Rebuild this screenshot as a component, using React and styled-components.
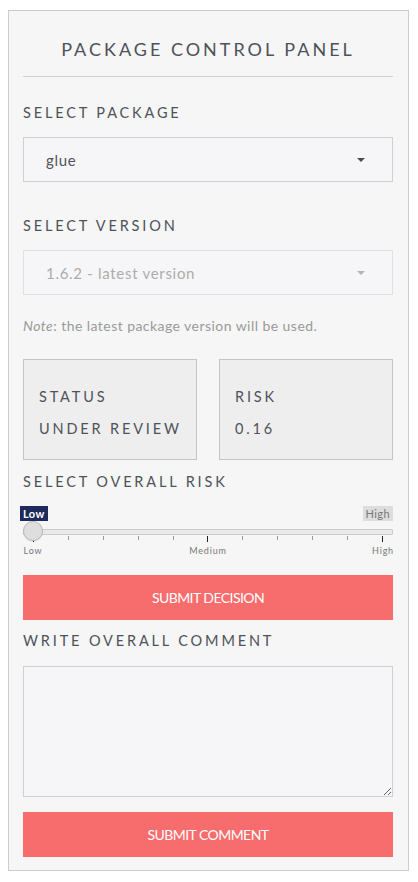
import React from "react";
import styled, { createGlobalStyle } from "styled-components";

const Global = createGlobalStyle`
  html, body { margin: 0; padding: 0; background: #ffffff; }
  body { font-family: "Lato", "Open Sans", sans-serif; }
  * { box-sizing: border-box; }
`;

const Panel = styled.div`
  margin: 10px 0 0 8px;
  width: 401px;
  background: #f6f6f6;
  border: 1px solid #cccccc;
  padding: 27px 15px 13px 14px;
  display: flex;
  flex-direction: column;
`;

const Title = styled.h1`
  margin: 0;
  font-size: 18px;
  line-height: 22px;
  font-weight: 400;
  letter-spacing: 3px;
  color: #4e525a;
  text-align: center;
`;

const Rule = styled.hr`
  margin: 16px 0 0;
  border: 0;
  height: 1px;
  background: #d0d0d3;
`;

const Label = styled.div`
  margin-top: ${(p) => p.$mt}px;
  font-size: 14.5px;
  line-height: 20px;
  letter-spacing: 2.85px;
  color: #4e525a;
  text-transform: uppercase;
  white-space: nowrap;
`;

const SelectBox = styled.div`
  margin-top: 14px;
  height: 45px;
  border: 1px solid ${(p) => (p.$disabled ? "#e1e1e3" : "#cdd0d6")};
  background: #f6f6f8;
  display: flex;
  align-items: center;
  justify-content: space-between;
  padding: 0 27px 0 22px;
  font-size: 15px;
  letter-spacing: 0.7px;
  color: ${(p) => (p.$disabled ? "#acacac" : "#50535a")};
`;

const Caret = styled.span`
  width: 0;
  height: 0;
  border-left: 4.5px solid transparent;
  border-right: 4.5px solid transparent;
  border-top: 4.5px solid ${(p) => (p.$disabled ? "#b5b5b5" : "#4a4a4a")};
`;

const Note = styled.p`
  margin: 22px 0 0;
  font-size: 14px;
  line-height: 18px;
  color: #9a9a9a;
  letter-spacing: 0.45px;
  em { font-style: italic; }
`;

const Cards = styled.div`
  margin-top: 24px;
  display: grid;
  grid-template-columns: 174px 174px;
  justify-content: space-between;
`;

const Card = styled.div`
  height: 101px;
  background: #eeeeee;
  border: 1px solid #c4c4c4;
  padding: 27px 10px 0 15px;
  display: flex;
  flex-direction: column;
  gap: 12px;
`;

const CardLine = styled.div`
  font-size: 14.5px;
  line-height: 20px;
  letter-spacing: 2.85px;
  color: #4e525a;
  white-space: nowrap;
`;

const Slider = styled.div`
  position: relative;
  height: 83px;
`;

const Badge = styled.span`
  position: absolute;
  top: 14px;
  height: 15px;
  line-height: 15px;
  padding: 0 3px;
  font-size: 11px;
  font-weight: ${(p) => (p.$active ? 700 : 400)};
  letter-spacing: 0.4px;
  background: ${(p) => (p.$active ? "#1f2a5c" : "#dddddd")};
  color: ${(p) => (p.$active ? "#ffffff" : "#777777")};
`;

const Track = styled.div`
  position: absolute;
  left: 0;
  right: 0;
  top: 37px;
  height: 6px;
  background: #eaeaea;
  border: 1px solid #cccccc;
  border-radius: 1px;
`;

const Thumb = styled.div`
  position: absolute;
  left: 0;
  top: 29px;
  width: 20px;
  height: 20px;
  border-radius: 50%;
  background: #dedede;
  border: 1px solid #b8b8b8;
  box-shadow: 0 1px 1px rgba(0, 0, 0, 0.08);
`;

const Ticks = styled.div`
  position: absolute;
  left: 10px;
  right: 10px;
  top: 44px;
  display: flex;
  justify-content: space-between;
`;

const Tick = styled.span`
  width: 1px;
  height: ${(p) => (p.$major ? 6 : 4)}px;
  background: ${(p) => (p.$major ? "#222222" : "#999999")};
`;

const TickLabels = styled.div`
  position: absolute;
  left: 10px;
  right: 10px;
  top: 53px;
  height: 12px;
`;

const TickLabel = styled.span`
  position: absolute;
  transform: translateX(-50%);
  font-size: 9px;
  line-height: 12px;
  letter-spacing: 0.8px;
  color: #777777;
  white-space: nowrap;
`;

const Button = styled.button`
  height: 45px;
  width: 100%;
  border: 0;
  background: #f76c6c;
  color: #ffffff;
  font-family: "Lato", sans-serif;
  font-size: 14px;
  letter-spacing: -0.55px;
  font-weight: 400;
  margin-top: ${(p) => p.$mt || 0}px;
  cursor: pointer;
`;

const Textarea = styled.textarea`
  margin-top: 15px;
  height: 131px;
  width: 100%;
  resize: vertical;
  border: 1px solid #cdd0d6;
  background: #f6f6f8;
  font-family: "Lato", sans-serif;
  display: block;
`;

export default function App() {
  const ticks = Array.from({ length: 11 }, (_, i) => i);
  return (
    <>
      <Global />
      <Panel>
        <Title>PACKAGE CONTROL PANEL</Title>
        <Rule />
        <Label $mt={26}>Select Package</Label>
        <SelectBox>
          <span>glue</span>
          <Caret />
        </SelectBox>
        <Label $mt={34}>Select Version</Label>
        <SelectBox $disabled>
          <span>1.6.2 - latest version</span>
          <Caret $disabled />
        </SelectBox>
        <Note>
          <em>Note</em>: the latest package version will be used.
        </Note>
        <Cards>
          <Card>
            <CardLine>STATUS</CardLine>
            <CardLine>UNDER REVIEW</CardLine>
          </Card>
          <Card>
            <CardLine>RISK</CardLine>
            <CardLine>0.16</CardLine>
          </Card>
        </Cards>
        <Label $mt={12}>Select Overall Risk</Label>
        <Slider>
          <Badge $active style={{ left: "-3px" }}>Low</Badge>
          <Badge style={{ right: 0 }}>High</Badge>
          <Track />
          <Ticks>
            {ticks.map((t) => (
              <Tick key={t} $major={t === 0 || t === 5 || t === 10} />
            ))}
          </Ticks>
          <TickLabels>
            <TickLabel style={{ left: "0%" }}>Low</TickLabel>
            <TickLabel style={{ left: "50%" }}>Medium</TickLabel>
            <TickLabel style={{ left: "100%" }}>High</TickLabel>
          </TickLabels>
          <Thumb />
        </Slider>
        <Button>SUBMIT DECISION</Button>
        <Label $mt={11}>Write Overall Comment</Label>
        <Textarea />
        <Button $mt={15}>SUBMIT COMMENT</Button>
      </Panel>
    </>
  );
}
